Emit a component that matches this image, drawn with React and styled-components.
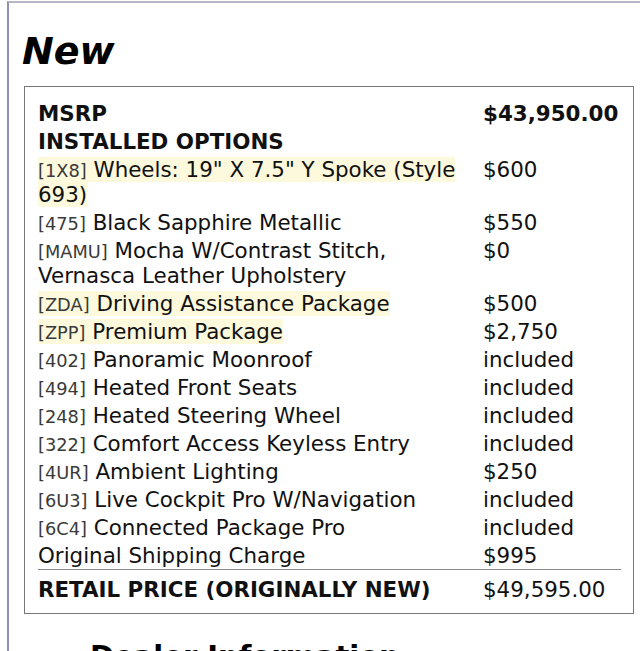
import React from "react";
import styled, { createGlobalStyle } from "styled-components";

const GlobalStyle = createGlobalStyle`
  body {
    margin: 0;
    background: #ffffff;
    font-family: "DejaVu Sans", "Liberation Sans", sans-serif;
    color: #111;
  }
`;

const Frame = styled.div`
  margin: 1px 0 0 7px;
  border-left: 2px solid #8e8eb6;
  border-top: 2px solid #b6b6c6;
  min-height: 700px;
  padding-left: 13px;
`;

const Title = styled.h2`
  margin: 26px 0 0 0;
  font-size: 38px;
  font-weight: 700;
  font-style: italic;
  line-height: normal;
  color: #000;
`;

const Sticker = styled.div`
  margin: 13px 0 0 2px;
  width: 610px;
  box-sizing: border-box;
  border: 1px solid #777;
  padding: 12px 12px 9px 13px;
  font-size: 21.4px;
  line-height: 25px;
`;

const Row = styled.div`
  display: grid;
  grid-template-columns: 437px 1fr;
  column-gap: 8px;
  padding: ${({ $total }) => ($total ? "7px 0 1.5px" : "1.5px 0")};
  border-top: ${({ $total }) => ($total ? "1px solid #888" : "none")};
`;

const Price = styled.div`
  font-weight: ${({ $bold }) => ($bold ? 700 : 400)};
`;

const Label = styled.div`
  font-weight: ${({ $bold }) => ($bold ? 700 : 400)};
`;

const Mark = styled.span`
  background: ${({ $hl }) => ($hl ? "#fcf9dc" : "transparent")};
`;

const Code = styled.span`
  font-size: 17.8px;
  line-height: 1;
  color: #3a3a3a;
`;

const NextHeading = styled.h2`
  margin: 25px 0 0 68px;
  font-size: 29px;
  font-weight: 700;
  line-height: normal;
  color: #000;
`;

const options = [
  { code: "1X8", name: "Wheels: 19\" X 7.5\" Y Spoke (Style 693)", price: "$600", hl: true },
  { code: "475", name: "Black Sapphire Metallic", price: "$550" },
  { code: "MAMU", name: "Mocha W/Contrast Stitch, Vernasca Leather Upholstery", price: "$0" },
  { code: "ZDA", name: "Driving Assistance Package", price: "$500", hl: true },
  { code: "ZPP", name: "Premium Package", price: "$2,750", hl: true },
  { code: "402", name: "Panoramic Moonroof", price: "included" },
  { code: "494", name: "Heated Front Seats", price: "included" },
  { code: "248", name: "Heated Steering Wheel", price: "included" },
  { code: "322", name: "Comfort Access Keyless Entry", price: "included" },
  { code: "4UR", name: "Ambient Lighting", price: "$250" },
  { code: "6U3", name: "Live Cockpit Pro W/Navigation", price: "included" },
  { code: "6C4", name: "Connected Package Pro", price: "included" },
];

export default function App() {
  return (
    <>
      <GlobalStyle />
      <Frame>
        <Title>New</Title>
        <Sticker>
          <Row>
            <Label $bold>MSRP</Label>
            <Price $bold>$43,950.00</Price>
          </Row>
          <Row>
            <Label $bold>INSTALLED OPTIONS</Label>
            <Price />
          </Row>
          {options.map((o) => (
            <Row key={o.code}>
              <Label>
                <Mark $hl={o.hl}>
                  <Code>[{o.code}]</Code> {o.name}
                </Mark>
              </Label>
              <Price>{o.price}</Price>
            </Row>
          ))}
          <Row>
            <Label>Original Shipping Charge</Label>
            <Price>$995</Price>
          </Row>
          <Row $total>
            <Label $bold>RETAIL PRICE (ORIGINALLY NEW)</Label>
            <Price>$49,595.00</Price>
          </Row>
        </Sticker>
        <NextHeading>Dealer Information</NextHeading>
      </Frame>
    </>
  );
}
